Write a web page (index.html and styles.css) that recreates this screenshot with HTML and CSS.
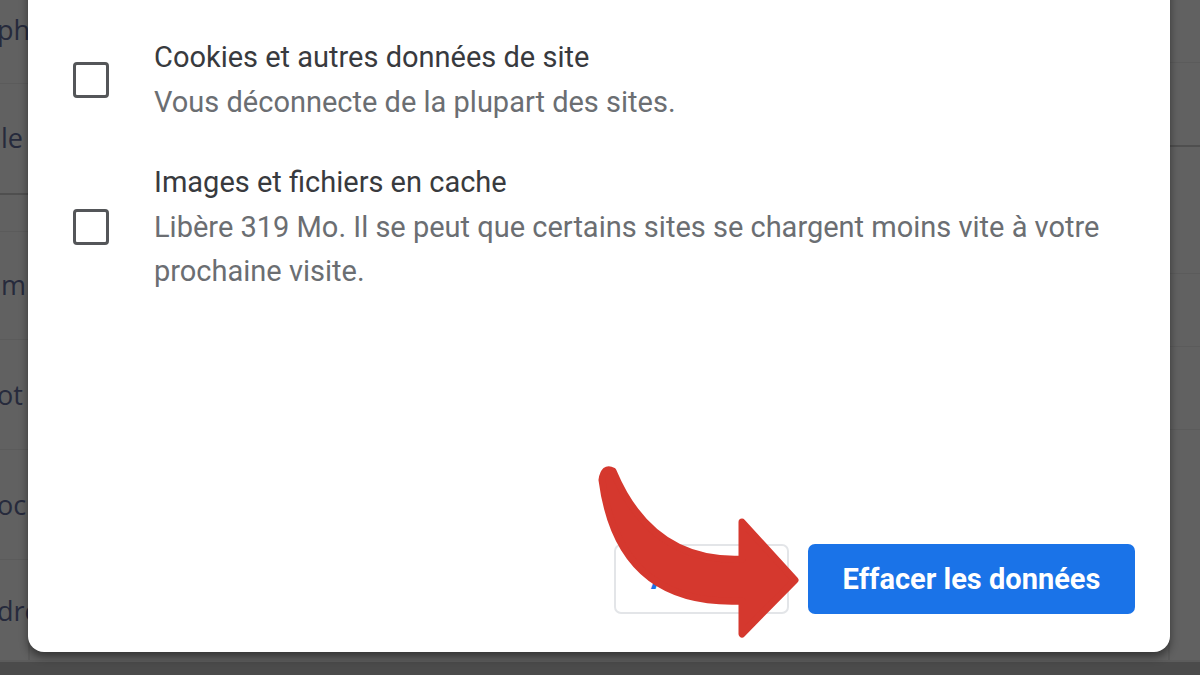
FILE: index.html
```html
<!DOCTYPE html>
<html lang="fr">
<head>
  <meta charset="UTF-8" />
  <meta name="viewport" content="width=device-width, initial-scale=1.0"/>
  <title>Effacer les données de navigation</title>
  <link rel="stylesheet" href="styles.css">
</head>
<body>

  <!-- Dimmed settings page behind the dialog -->
  <div class="page">
    <div class="page-col page-left">
      <div class="row row-a"><span class="frag">pho</span></div>
      <div class="row row-b"><span class="frag">le</span></div>
      <div class="row row-c"></div>
      <div class="row row-d"><span class="frag">m</span></div>
      <div class="row row-e"><span class="frag">ot</span></div>
      <div class="row row-e"><span class="frag">oc</span></div>
      <div class="row row-f"><span class="frag">dre</span></div>
    </div>
    <div class="page-mid"></div>
    <div class="page-col page-right">
      <div class="row row-r1"></div>
      <div class="row row-r2 dark"></div>
      <div class="row row-r3"></div>
      <div class="row row-r4"></div>
      <div class="row row-r5"></div>
    </div>
  </div>
  <div class="page-bottom"></div>

  <!-- Dialog -->
  <div class="dialog">
    <div class="options">
      <label class="option">
        <span class="box"></span>
        <div class="option-text">
          <div class="option-title">Cookies et autres données de site</div>
          <div class="option-desc">Vous déconnecte de la plupart des sites.</div>
        </div>
      </label>
      <label class="option">
        <span class="box"></span>
        <div class="option-text">
          <div class="option-title">Images et fichiers en cache</div>
          <div class="option-desc">Libère 319 Mo. Il se peut que certains sites se chargent moins vite à votre prochaine visite.</div>
        </div>
      </label>
    </div>
    <div class="actions">
      <button class="btn btn-cancel">Annuler</button>
      <button class="btn btn-primary">Effacer les données</button>
    </div>
  </div>

  <!-- Red pointer arrow -->
  <svg class="arrow" width="1200" height="675" viewBox="0 0 1200 675">
    <path d="M 602 480 Q 604 466 613 471 C 636 526 676 562 742 559 L 742 522 L 795 580 L 742 634 L 742 601 C 652 605 612 556 602 480 Z"
          fill="#d5382e" stroke="#d5382e" stroke-width="7" stroke-linejoin="round"/>
  </svg>

</body>
</html>
```

FILE: styles.css
```css
html, body {
  margin: 0;
  height: 100%;
}

body {
  background: #616161;
  font-family: Roboto, "Noto Sans", sans-serif;
  overflow: hidden;
  position: relative;
}

/* background page */
.page {
  display: flex;
  height: 660px;
}

.page-col {
  display: flex;
  flex-direction: column;
}

.page-left {
  width: 28px;
  border-right: 2px solid #5a5a5a;
  overflow: hidden;
}

.page-mid {
  flex: 1;
}

.page-right {
  width: 30px;
  border-left: 2px solid #5a5a5a;
}

.row {
  border-bottom: 1px solid #5b5b5b;
  display: flex;
  align-items: center;
  flex-shrink: 0;
}

.row.dark, .row-b {
  border-bottom: 2px solid #4f4f4f;
}

.row-a { height: 83px; }
.row-b { height: 109px; }
.row-c { height: 36px; }
.row-d { height: 107px; }
.row-e { height: 109px; }
.row-f { height: 100px; border-bottom: none; }

.row-r1 { height: 62px; }
.row-r2 { height: 82px; }
.row-r3 { height: 126px; }
.row-r4 { height: 72px; }
.row-r5 { height: 82px; }

.frag {
  font-family: "Open Sans", sans-serif;
  font-size: 27px;
  color: #262a3c;
  white-space: nowrap;
}

.row-a .frag { margin-left: -3px; margin-top: -24px; }
.row-b .frag { margin-left: 1px; margin-top: -2px; }
.row-d .frag { margin-left: 1px; margin-top: -2px; }
.row-e .frag { margin-left: -3px; }
.row-f .frag { margin-left: -3px; margin-top: 0; }

.page-bottom {
  height: 15px;
  background: #4b4b4b;
  border-top: 2px solid #5c5c5c;
}

/* dialog */
.dialog {
  position: absolute;
  left: 28px;
  width: 1142px;
  top: -20px;
  bottom: 23px;
  background: #fff;
  border-radius: 0 0 16px 16px;
  box-shadow: 0 5px 8px rgba(0, 0, 0, 0.45);
  box-sizing: border-box;
  padding: 55px 35px 38px 45px;
  display: flex;
  flex-direction: column;
  justify-content: space-between;
}

.options {
  display: flex;
  flex-direction: column;
  gap: 36px;
}

.option {
  display: flex;
  align-items: center;
  gap: 45px;
}

.box {
  width: 36px;
  height: 36px;
  box-sizing: border-box;
  border: 3.5px solid #545659;
  border-radius: 4px;
  flex-shrink: 0;
}

.option-title {
  font-size: 29px;
  line-height: 45px;
  color: #383a3e;
}

.option-desc {
  font-size: 29px;
  line-height: 44px;
  color: #6b6e72;
}

.actions {
  display: flex;
  justify-content: flex-end;
  gap: 19px;
}

.btn {
  height: 70px;
  border-radius: 7px;
  font-family: Roboto, "Noto Sans", sans-serif;
  font-size: 29px;
  font-weight: 700;
  cursor: pointer;
}

.btn-cancel {
  width: 175px;
  background: #fff;
  border: 2px solid #e3e5e8;
  color: #1a73e8;
}

.btn-primary {
  width: 327px;
  background: #1a73e8;
  border: none;
  color: #fff;
}

.arrow {
  position: absolute;
  left: 0;
  top: 0;
  pointer-events: none;
}
```
